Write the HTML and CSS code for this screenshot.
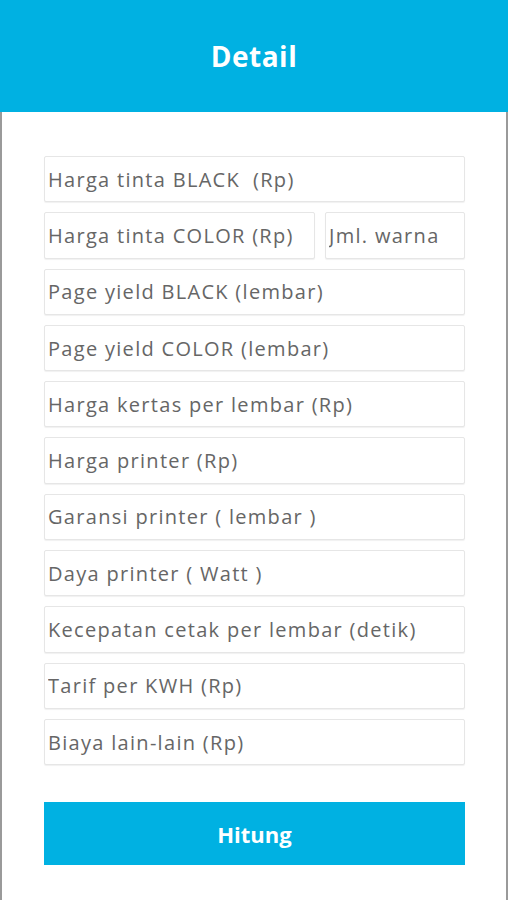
FILE: index.html
```html
<!DOCTYPE html>
<html lang="id">
<head>
  <meta charset="UTF-8">
  <title>Detail</title>
  <link rel="stylesheet" href="styles.css">
</head>
<body>
  <div class="detail_header">
    <h1>Detail</h1>
  </div>

  <div class="detail_container">
    <form class="detail_form">
      <input type="text" class="detail_input" placeholder="Harga tinta BLACK  (Rp)">
      <div class="detail_row">
        <input type="text" class="detail_input" placeholder="Harga tinta COLOR (Rp)">
        <input type="text" class="detail_input detail_input-small" placeholder="Jml. warna">
      </div>
      <input type="text" class="detail_input" placeholder="Page yield BLACK (lembar)">
      <input type="text" class="detail_input" placeholder="Page yield COLOR (lembar)">
      <input type="text" class="detail_input" placeholder="Harga kertas per lembar (Rp)">
      <input type="text" class="detail_input" placeholder="Harga printer (Rp)">
      <input type="text" class="detail_input" placeholder="Garansi printer ( lembar )">
      <input type="text" class="detail_input" placeholder="Daya printer ( Watt )">
      <input type="text" class="detail_input" placeholder="Kecepatan cetak per lembar (detik)">
      <input type="text" class="detail_input" placeholder="Tarif per KWH (Rp)">
      <input type="text" class="detail_input" placeholder="Biaya lain-lain (Rp)">

      <button type="button" class="detail_btn">Hitung</button>
    </form>
  </div>
</body>
</html>
```

FILE: styles.css
```css
    body {
      margin: 0;
      padding: 0;
      font-family: "Open Sans", Arial, sans-serif;
      background-color: #fff;
    }

    .detail_header {
      height: 112px;
      background-color: #00b1e2;
      display: flex;
      align-items: center;
      justify-content: center;
    }

    .detail_header h1 {
      margin: 0;
      color: #fff;
      font-size: 28px;
      font-weight: 700;
      letter-spacing: 0.5px;
    }

    .detail_container {
      min-height: 788px;
      border-left: 2px solid #9a9a9a;
      border-right: 2px solid #9a9a9a;
      box-sizing: border-box;
      padding: 44px 41px 0 42px;
    }

    .detail_form {
      display: flex;
      flex-direction: column;
      gap: 10px;
    }

    .detail_row {
      display: flex;
      gap: 10px;
    }

    .detail_input {
      height: 46.3px;
      box-sizing: border-box;
      padding: 0 3px;
      font-family: "Open Sans", Arial, sans-serif;
      font-size: 20px;
      letter-spacing: 1.3px;
      color: #555;
      border: 1px solid #e6e6e6;
      border-radius: 2px;
      box-shadow: 0 1px 1px rgba(0, 0, 0, 0.06);
      outline: none;
      min-width: 0;
    }

    .detail_row .detail_input {
      flex: 1;
    }

    .detail_row .detail_input-small {
      flex: 0 0 140px;
    }

    .detail_input::placeholder {
      color: #666;
    }

    .detail_btn {
      margin-top: 27px;
      height: 63px;
      border: none;
      background-color: #00b1e2;
      color: #fff;
      font-family: "Open Sans", Arial, sans-serif;
      font-size: 22px;
      font-weight: 700;
      cursor: pointer;
    }
```
